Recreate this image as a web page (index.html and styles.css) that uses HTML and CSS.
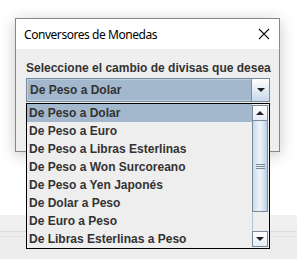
FILE: index.html
```html
<!DOCTYPE html>
<html lang="es">
<head>
    <meta charset="UTF-8">
    <meta name="viewport" content="width=device-width, initial-scale=1.0">
    <title>Conversores de Monedas</title>
    <link rel="stylesheet" href="styles.css">
</head>
<body>
    <div class="desktop">
        <div class="backdrop">
            <div class="band"></div>
        </div>

        <div class="dialog">
            <div class="titlebar">
                <span class="title">Conversores de Monedas</span>
                <svg class="close" width="12" height="12" viewBox="0 0 12 12">
                    <path d="M1 1 L11 11 M11 1 L1 11" stroke="#111" stroke-width="1.1" fill="none"/>
                </svg>
            </div>
            <div class="content">
                <div class="prompt">Seleccione el cambio de divisas que desea</div>
                <div class="combo">
                    <div class="combo-value">De Peso a Dolar</div>
                    <div class="combo-button"><span class="arrow-down"></span></div>
                </div>
            </div>
        </div>

        <!-- popup del combo, abierto encima del dialogo -->
        <div class="popup">
            <ul class="items">
                <li class="item selected">De Peso a Dolar</li>
                <li class="item">De Peso a Euro</li>
                <li class="item">De Peso a Libras Esterlinas</li>
                <li class="item">De Peso a Won Surcoreano</li>
                <li class="item">De Peso a Yen Japonés</li>
                <li class="item">De Dolar a Peso</li>
                <li class="item">De Euro a Peso</li>
                <li class="item">De Libras Esterlinas a Peso</li>
            </ul>
            <div class="scrollbar">
                <div class="scroll-btn"><span class="arrow-up"></span></div>
                <div class="thumb"><span class="grip"></span></div>
                <div class="track"></div>
                <div class="scroll-btn"><span class="arrow-down"></span></div>
            </div>
        </div>
    </div>
</body>
</html>
```

FILE: styles.css
```css
body {
    margin: 0;
    background: #ffffff;
    font-family: "Liberation Sans", Arial, sans-serif;
}
.desktop {
    position: relative;
    width: 297px;
    height: 259px;
    overflow: hidden;
}
.backdrop {
    padding-top: 215px;
}
.band {
    height: 44px;
    background: #f0f0f0;
    background-image: linear-gradient(to bottom, transparent 16px, #dcdcdc 16px, #dcdcdc 17px, #ececec 17px, #ececec 21px, #e2e2e2 21px, #e2e2e2 22px, #ededed 22px);
}
.dialog {
    position: absolute;
    left: 15px;
    top: 18px;
    width: 263px;
    height: 132px;
    border: 1px solid #888888;
    background: #eeeeee;
    box-shadow: 0 3px 14px rgba(0, 0, 0, 0.22);
    display: flex;
    flex-direction: column;
}
.titlebar {
    height: 30px;
    background: #ffffff;
    display: flex;
    align-items: center;
    justify-content: space-between;
    padding: 0 9px 0 8px;
}
.title {
    font-family: "Noto Sans", "Open Sans", sans-serif;
    font-size: 12px;
    letter-spacing: -0.45px;
    color: #000;
}
.content {
    flex: 1;
    padding: 12px 9px 0 10px;
}
.prompt {
    font-weight: bold;
    font-size: 12px;
    line-height: 14px;
    color: #333333;
    white-space: nowrap;
}
.combo {
    margin-top: 3px;
    height: 22px;
    border: 1px solid #7a8a99;
    display: flex;
    background: #a3b8cc;
}
.combo-value {
    flex: 1;
    padding-left: 2px;
    font-weight: bold;
    font-size: 12px;
    color: #333333;
    border: 1px solid #b8cfe5;
    border-width: 1px 0 1px 1px;
    line-height: 20px;
}
.combo-button {
    width: 17px;
    border-left: 1px solid #7a8a99;
    background: linear-gradient(to bottom, #ffffff, #dde8f3 60%, #c8d8ea);
    display: flex;
    align-items: center;
    justify-content: center;
}
.arrow-down {
    width: 0;
    height: 0;
    border-left: 4px solid transparent;
    border-right: 4px solid transparent;
    border-top: 4px solid #222;
}
.arrow-up {
    width: 0;
    height: 0;
    border-left: 4px solid transparent;
    border-right: 4px solid transparent;
    border-bottom: 4px solid #222;
}
.popup {
    position: absolute;
    left: 26px;
    top: 103px;
    width: 242px;
    height: 144px;
    border: 1px solid #000000;
    background: #eeeeee;
    display: flex;
}
.items {
    flex: 1;
    margin: 0;
    padding: 0;
    list-style: none;
}
.item {
    height: 18px;
    line-height: 18px;
    padding-left: 2px;
    font-weight: bold;
    font-size: 12px;
    color: #333333;
    white-space: nowrap;
}
.item.selected {
    background: #a3b8cc;
}
.scrollbar {
    width: 16px;
    margin-right: 1px;
    display: flex;
    flex-direction: column;
    background: #eeeeee;
}
.scroll-btn {
    height: 14px;
    border: 1px solid #7a8a99;
    background: linear-gradient(to bottom, #ffffff, #e4ecf5);
    display: flex;
    align-items: center;
    justify-content: center;
    margin-top: 1px;
}
.thumb {
    height: 90px;
    border: 1px solid #7a8a99;
    border-top: none;
    background: linear-gradient(to right, #c8d8ea, #eef3f9 45%, #dde8f3 70%, #b8cfe5);
    display: flex;
    align-items: center;
    justify-content: center;
}
.grip {
    width: 9px;
    height: 5px;
    background: linear-gradient(to bottom, #7a8a99 1px, transparent 1px, transparent 2px, #7a8a99 2px, #7a8a99 3px, transparent 3px, transparent 4px, #7a8a99 4px);
}
.track {
    flex: 1;
    border-left: 1px solid #b8c4d0;
}
.scrollbar .scroll-btn:last-child {
    margin-top: 0;
    margin-bottom: 1px;
}
```
